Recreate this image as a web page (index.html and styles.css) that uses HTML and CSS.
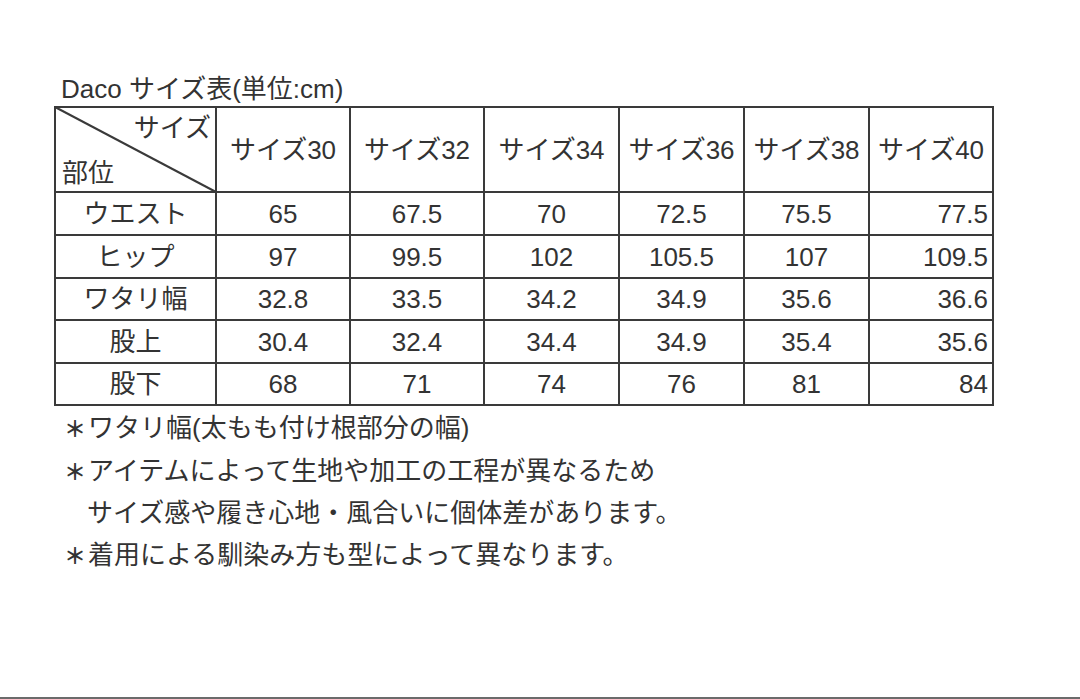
FILE: index.html
```html
<!DOCTYPE html>
<html lang="ja">
<head>
<meta charset="utf-8">
<title>Daco サイズ表</title>
<link rel="stylesheet" href="styles.css">
</head>
<body>
<div class="page">
  <h1 class="title">Daco サイズ表(単位:cm)</h1>
  <div class="chart">
    <div class="cell corner">
      <svg class="diag" viewBox="0 0 100 100" preserveAspectRatio="none" aria-hidden="true"><line x1="0" y1="0" x2="100" y2="100" vector-effect="non-scaling-stroke"/></svg>
      <span class="corner-top">サイズ</span>
      <span class="corner-bottom">部位</span>
    </div>
    <div class="cell">サイズ30</div>
    <div class="cell">サイズ32</div>
    <div class="cell">サイズ34</div>
    <div class="cell">サイズ36</div>
    <div class="cell">サイズ38</div>
    <div class="cell">サイズ40</div>

    <div class="cell">ウエスト</div>
    <div class="cell">65</div>
    <div class="cell">67.5</div>
    <div class="cell">70</div>
    <div class="cell">72.5</div>
    <div class="cell">75.5</div>
    <div class="cell end">77.5</div>

    <div class="cell">ヒップ</div>
    <div class="cell">97</div>
    <div class="cell">99.5</div>
    <div class="cell">102</div>
    <div class="cell">105.5</div>
    <div class="cell">107</div>
    <div class="cell end">109.5</div>

    <div class="cell">ワタリ幅</div>
    <div class="cell">32.8</div>
    <div class="cell">33.5</div>
    <div class="cell">34.2</div>
    <div class="cell">34.9</div>
    <div class="cell">35.6</div>
    <div class="cell end">36.6</div>

    <div class="cell">股上</div>
    <div class="cell">30.4</div>
    <div class="cell">32.4</div>
    <div class="cell">34.4</div>
    <div class="cell">34.9</div>
    <div class="cell">35.4</div>
    <div class="cell end">35.6</div>

    <div class="cell">股下</div>
    <div class="cell">68</div>
    <div class="cell">71</div>
    <div class="cell">74</div>
    <div class="cell">76</div>
    <div class="cell">81</div>
    <div class="cell end">84</div>
  </div>
  <div class="notes">
    <p class="note"><span class="ast">＊</span>ワタリ幅(太もも付け根部分の幅)</p>
    <p class="note"><span class="ast">＊</span>アイテムによって生地や加工の工程が異なるため</p>
    <p class="note cont">サイズ感や履き心地・風合いに個体差があります。</p>
    <p class="note"><span class="ast">＊</span>着用による馴染み方も型によって異なります。</p>
  </div>
</div>
</body>
</html>
```

FILE: styles.css
```css
html, body {
  margin: 0;
  padding: 0;
  background: #ffffff;
}

body {
  width: 1080px;
  height: 699px;
  overflow: hidden;
  font-family: "Liberation Sans", "Noto Sans CJK JP", sans-serif;
  color: #333333;
}

.page {
  height: 699px;
  border-bottom: 2px solid #6b6b6b;
  padding: 74px 0 0 54px;
  box-sizing: border-box;
}

.title {
  margin: 0 0 2px 7px;
  font-size: 26px;
  font-weight: normal;
  line-height: 30px;
  color: #333333;
}

.chart {
  display: grid;
  grid-template-columns: 159px 132px 132px 133px 123px 123px 122px;
  grid-template-rows: 83px 41px 41px 40px 41px 40px;
  gap: 2px;
  padding: 2px;
  width: 940px;
  box-sizing: border-box;
  background: #3a3a3a;
}

.cell {
  background: #ffffff;
  display: flex;
  align-items: center;
  justify-content: center;
  font-size: 26px;
  line-height: 30px;
  white-space: nowrap;
}

.cell.end {
  justify-content: flex-end;
  padding-right: 4px;
}

.corner {
  position: relative;
  flex-direction: column;
  align-items: stretch;
  justify-content: space-between;
  padding: 6px 4px 4px 6px;
}

.corner-top {
  align-self: flex-end;
  line-height: 28px;
}

.corner-bottom {
  align-self: flex-start;
  line-height: 28px;
}

.diag {
  position: absolute;
  top: -1px;
  left: -1px;
  width: calc(100% + 2px);
  height: calc(100% + 2px);
  overflow: visible;
}

.diag line {
  stroke: #3a3a3a;
  stroke-width: 2;
}

.notes {
  margin: 2px 0 0 2px;
}

.note {
  margin: 0;
  font-size: 26px;
  line-height: 41.5px;
  white-space: nowrap;
}

.ast {
  font-size: 22px;
  font-weight: 700;
  margin-left: 8px;
  margin-right: 2px;
}

.note.cont {
  padding-left: 31px;
}
```
